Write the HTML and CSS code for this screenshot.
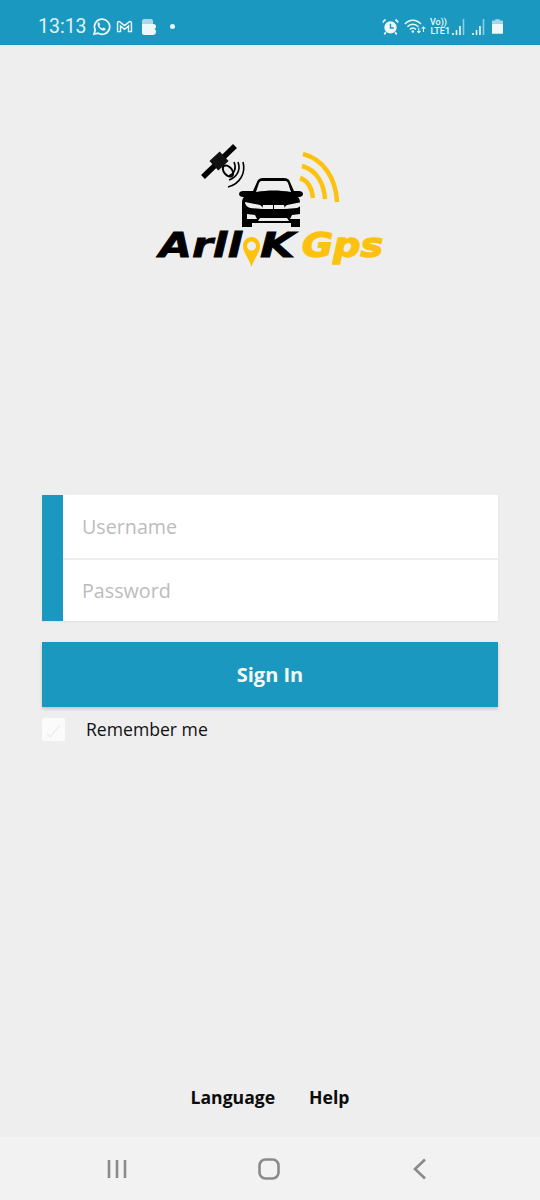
FILE: index.html
```html
<!DOCTYPE html>
<html lang="en">
<head>
<meta charset="utf-8">
<title>ArllOK Gps</title>
<link rel="stylesheet" href="styles.css">
</head>
<body>
<div class="phone">
  <header class="status">
    <div class="status-left">
      <span class="clock">13:13</span>
      <svg class="ic ic-wa" viewBox="0 0 20 20"><path class="st" d="M2.200 18l1.200-4.300A8 8 0 1 1 6.300 17z"/><path class="fl" d="M7 5.600c-.6.300-1.200 1-1.100 2.200.2 2.800 3.300 6 6.300 6.500 1.200.1 2-.6 2.200-1.300.1-.5 0-.8-.3-1l-1.700-.8c-.4-.1-.6 0-.8.300l-.6.700c-1.500-.6-2.600-1.600-3.300-3l.6-.7c.2-.3.2-.5.1-.8l-.7-1.700c-.2-.4-.4-.5-.7-.4z"/></svg>
      <svg class="ic ic-m" viewBox="0 0 18 14"><path class="st" d="M1.500 12.500V3.200c0-1.500 1.500-2 2.500-1.200L9 6l5-4c1-.8 2.500-.3 2.500 1.200v9.300h-3.200V6.500L9 10 4.700 6.500v6z"/></svg>
      <svg class="ic ic-b" viewBox="0 0 14 16"><path class="dim" d="M0 2a2 2 0 0 1 2-2h7a2 2 0 0 1 2 2v3H0z"/><path class="fl" d="M0 5h11.500a2.500 2.500 0 0 1 2.500 2.500v1L12.500 10 14 11.500v1a3.500 3.500 0 0 1-3.500 3.500H2a2 2 0 0 1-2-2z"/></svg>
      <span class="dot"></span>
    </div>
    <div class="status-right">
      <svg class="ic ic-alarm" viewBox="0 0 18 18"><circle class="fl" cx="9" cy="10" r="6.500"/><path class="fl" d="M1 5.500L4.500 2 3 1 .5 3.500zM17 5.500L13.500 2 15 1l2.500 2.500z"/><path class="blue" d="M9 6v4.500h3.500"/><path class="st" d="M4 15l-1.500 2.500M14 15l1.500 2.500"/></svg>
      <svg class="ic ic-wifi" viewBox="0 0 26 19"><path class="st" d="M1 6.500c5.500-6 13.500-6 19 0M4 9.800c3.800-4 9.200-4 13 0M7 13c2-2.200 5-2.200 7 0"/><circle class="fl" cx="10.500" cy="15.500" r="1.500"/><path class="st thin" d="M17.500 11v6M15.500 15l2 2 2-2M23 10v6M21 12l2-2 2 2"/></svg>
      <div class="volte"><span>Vo))</span><span>LTE1</span></div>
      <svg class="ic ic-sig" viewBox="0 0 14 18"><path class="st bar" d="M1.500 17v-2M5 17v-5M8.500 17V8"/><path class="st bar faint" d="M12 17V1"/></svg>
      <svg class="ic ic-sig" viewBox="0 0 14 18"><path class="st bar" d="M1.500 17v-2M5 17v-5M8.500 17V8"/><path class="st bar faint" d="M12 17V1"/></svg>
      <svg class="ic ic-bat" viewBox="0 0 12 16"><path class="dim" d="M3.500 0h5v1.500H11a1 1 0 0 1 1 1V5H0V2.500a1 1 0 0 1 1-1h2.500z"/><path class="fl" d="M0 5h12v10a1 1 0 0 1-1 1H1a1 1 0 0 1-1-1z"/></svg>
    </div>
  </header>

  <main class="main">
    <div class="logo-wrap">
      <svg class="logo" viewBox="0 0 240 140">
        <g class="sat">
          <path class="sat-panel" d="M53 42L85 11"/>
          <rect class="sat-body" x="-7" y="-6.500" width="14" height="13" transform="translate(69 26) rotate(-43)"/>
          <ellipse class="sat-dish" cx="78" cy="36" rx="4" ry="6.500" transform="rotate(-40 78 36)"/>
          <path class="sat-wave" d="M84 27c3 6 0 12-5 14M88 27c3 8-1 15-9 18M93 27c3 11-3 22-15 25"/>
        </g>
        <g class="car">
          <path d="M103 56l4-9c1-3 3-4 6-4h21c3 0 5 1 6 4l4 9h5c2 0 4 1 4 3s-2 3-4 3h-1c2 2 2 4 2 7v23h-9v-4h-39v4h-10V69c0-3 0-5 2-7h-1c-2 0-4-1-4-3s2-3 4-3z"/>
          <path class="car-glass" d="M106 57l3-9c1-2 2-2 4-2h21c2 0 3 0 4 2l3 9c-12-2-23-2-35 0z"/>
          <path class="car-glass" d="M95 67l15 3c2 1 3 3 2 4l-12-1c-3-1-5-3-5-6zM152 67l-15 3c-2 1-3 3-2 4l12-1c3-1 5-3 5-6z"/>
          <path class="car-glass" d="M113 70h10v4h-11zM124 70h10l1 4h-11z"/>
          <path class="car-glass" d="M97 79l8 1 2 4H97zM150 79l-8 1-2 4h10zM110 83h27l2 3h-31z"/>
        </g>
        <path class="wave" d="M153 19c20 5 33 24 34 48"/>
        <path class="wave" d="M152 31c15 4 22 18 23 33"/>
        <path class="wave" d="M150 43c9 3 12 11 13 20"/>
        <text class="logo-text" x="9" y="122" textLength="83" lengthAdjust="spacingAndGlyphs">Arll</text>
        <path class="pin" fill-rule="evenodd" d="M101.500 102c-5 0-8.500 4-8.500 9 0 7 6 12 8.500 21 2.500-9 8.500-14 8.500-21 0-5-3.500-9-8.500-9zm0 4.500a4.500 4.500 0 1 1 0 9 4.500 4.500 0 0 1 0-9z"/>
        <text class="logo-text" x="110" y="122" textLength="35" lengthAdjust="spacingAndGlyphs">K</text>
        <text class="logo-text yellow" x="152" y="122" textLength="81" lengthAdjust="spacingAndGlyphs">Gps</text>
      </svg>
    </div>

    <form class="form">
      <div class="fields">
        <input class="field" type="text" placeholder="Username">
        <input class="field" type="password" placeholder="Password">
      </div>
      <button class="signin" type="button">Sign In</button>
      <label class="remember">
        <span class="check"><svg viewBox="0 0 22 22"><path d="M5 15l3 3 9-11"/></svg></span>
        <span>Remember me</span>
      </label>
    </form>

    <div class="links">
      <span>Language</span>
      <span>Help</span>
    </div>
  </main>

  <nav class="nav">
    <svg class="nav-ic" viewBox="0 0 24 24"><path d="M4 3v18M12 3v18M20 3v18"/></svg>
    <svg class="nav-ic" viewBox="0 0 24 24"><rect x="2.500" y="2.500" width="19" height="19" rx="6"/></svg>
    <svg class="nav-ic" viewBox="0 0 24 24"><path d="M17 2.500L7 12l10 9.500"/></svg>
  </nav>
</div>
</body>
</html>
```

FILE: styles.css
```css
* { box-sizing: border-box; }
html, body { margin: 0; padding: 0; }
body { background: #eeeeee; font-family: "Open Sans", sans-serif; }
.phone { width: 540px; height: 1200px; display: flex; flex-direction: column; overflow: hidden; }

.status { height: 45px; flex: none; background: #1b98bf; display: flex; justify-content: space-between; align-items: center; padding: 9px 37px 0 38px; border-bottom: 1px solid #1a93b9; }
.status-left, .status-right { display: flex; align-items: center; }
.clock { font: 400 19.500px/1 Roboto, sans-serif; color: #dff3f8; width: 54px; }
.ic { display: block; flex: none; }
.fl { fill: #eef8fb; }
.dim { fill: #a9d8e6; }
.st { fill: none; stroke: #eef8fb; stroke-width: 1.800; }
.thin { stroke-width: 1.200; }
.blue { fill: none; stroke: #1b98bf; stroke-width: 1.500; }
.ic-wa { width: 19px; height: 19px; }
.ic-m { width: 17px; height: 13px; margin-left: 5px; }
.ic-m .st { stroke-width: 1.500; }
.ic-b { width: 14px; height: 16px; margin-left: 9px; }
.dot { width: 5px; height: 5px; border-radius: 50%; background: #eef8fb; margin-left: 14px; }
.ic-alarm { width: 17px; height: 17px; }
.ic-wifi { width: 22px; height: 17px; margin-left: 5px; }
.volte { display: flex; flex-direction: column; align-items: flex-end; font: 500 9px/9px Roboto, sans-serif; color: #eef8fb; margin-left: 4px; width: 20px; }
.volte span:first-child { padding-right: 3px; }
.ic-sig { width: 15px; height: 18px; margin-left: 1px; }
.ic-sig + .ic-sig { margin-left: 5px; }
.bar { stroke-width: 1.600; }
.faint { opacity: .55; }
.ic-bat { width: 11px; height: 15px; margin-left: 6px; }

.main { flex: 1; display: flex; flex-direction: column; padding: 90px 42px 0; }
.logo-wrap { display: flex; justify-content: center; }
.logo { width: 240px; height: 140px; display: block; }
.sat-panel { stroke: #000; stroke-width: 5.500; fill: none; }
.sat-body { fill: #111; }
.sat-dish { fill: none; stroke: #000; stroke-width: 2; }
.sat-wave { fill: none; stroke: #000; stroke-width: 1.600; }
.car { fill: #000; }
.car-glass { fill: #eeeeee; }
.wave { fill: none; stroke: #fdc20f; stroke-width: 4.500; }
.logo-text { font: italic 700 33px "DejaVu Sans", sans-serif; fill: #000; stroke: #000; stroke-width: .8; }
.logo-text.yellow { fill: #fdc20f; stroke: #fdc20f; stroke-width: 1.400; }
.pin { fill: #fdc20f; }

.form { margin-top: 220px; display: flex; flex-direction: column; }
.fields { display: flex; flex-direction: column; height: 126px; border-left: 21px solid #1b98bf; background: #fff; box-shadow: 0 1px 2px rgba(0,0,0,.06); }
.field { flex: 1; width: 100%; border: 0; outline: 0; background: transparent; padding: 0 19px; font: 400 19.700px "Open Sans", sans-serif; color: #333; }
.field:first-child { padding-top: 1px; }
.field + .field { border-top: 2px solid #eeeeee; }
.field::placeholder { color: #bcbcbc; opacity: 1; }
.signin { margin-top: 21px; height: 65px; border: 0; background: #1b98bf; color: #f2fafc; font: 700 20px "Open Sans", sans-serif; box-shadow: 0 2px 3px rgba(0,0,0,.18); }
.remember { margin-top: 10px; display: flex; align-items: center; gap: 21px; font-size: 17.600px; color: #111; height: 24px; }
.check { width: 23px; height: 23px; background: #fbfbfb; border-radius: 2px; display: block; }
.check svg { display: block; width: 23px; height: 23px; }
.check path { fill: none; stroke: #eeeeee; stroke-width: 1.500; }

.links { margin-top: auto; margin-bottom: 27px; display: flex; justify-content: center; gap: 34px; font-size: 17.600px; font-weight: 700; color: #0c0c0c; line-height: 25px; }

.nav { height: 63px; flex: none; background: #f2f2f2; display: flex; justify-content: space-between; align-items: center; padding: 0 108px 0 105px; }
.nav-ic { width: 24px; height: 24px; display: block; fill: none; stroke: #8a8a8a; stroke-width: 2.600; }
```
